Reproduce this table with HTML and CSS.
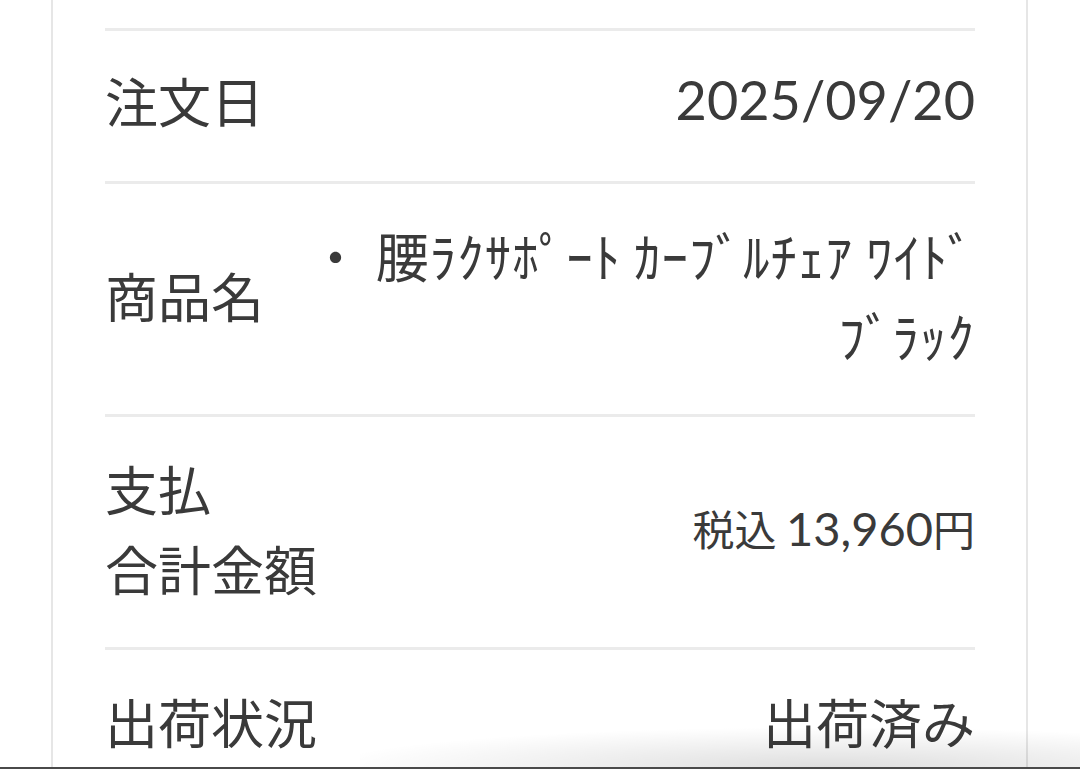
FILE: index.html
```html
<!DOCTYPE html>
<html lang="ja">
<head>
<meta charset="utf-8">
<title>注文詳細</title>
<link rel="stylesheet" href="styles.css">
</head>
<body>
<div class="page">
  <section class="card">
    <div class="row row-first">
      <div class="label">注文日</div>
      <div class="value date">2025/09/20</div>
    </div>
    <div class="row">
      <div class="label">商品名</div>
      <div class="value product">・ 腰ﾗｸｻﾎﾟｰﾄ ｶｰﾌﾞﾙﾁｪｱ ﾜｲﾄﾞ ﾌﾞﾗｯｸ</div>
    </div>
    <div class="row">
      <div class="label">支払<br>合計金額</div>
      <div class="value price"><span class="tax">税込</span> <span class="num">13,960</span><span class="yen">円</span></div>
    </div>
    <div class="row">
      <div class="label">出荷状況</div>
      <div class="value status">出荷済み</div>
    </div>
  </section>
  <div class="bottom-shadow"></div>
  <div class="bottom-bar"></div>
</div>
</body>
</html>
```

FILE: styles.css
```css
html, body {
  margin: 0;
  padding: 0;
  background: #ffffff;
  height: 769px;
  overflow: hidden;
}

.page {
  position: relative;
  height: 769px;
  overflow: hidden;
  font-family: "Noto Sans CJK JP", "Noto Sans", sans-serif;
  color: #383838;
}

.card {
  margin-left: 51px;
  width: 870px;
  padding: 28px 51px 0 52px;
  border-left: 2px solid #e6e6e6;
  border-right: 2px solid #e6e6e6;
  min-height: 800px;
}

.row {
  display: flex;
  align-items: center;
  border-top: 3px solid #ebebeb;
  padding: 31px 0 39px;
}

.row-first {
  padding: 29px 0 41px;
}

.label {
  flex: 0 0 200px;
  white-space: nowrap;
  font-size: 53px;
  line-height: 80px;
  color: #3a3a3a;
}

.value {
  flex: 1;
  text-align: right;
  line-height: 80px;
  color: #3a3a3a;
}

.date {
  font-family: "Lato", "Noto Sans CJK JP", sans-serif;
  font-size: 54px;
}

.product {
  font-size: 53px;
  letter-spacing: 1px;
}

.price {
  font-size: 42px;
}

.price .num {
  font-family: "Lato", sans-serif;
  font-size: 47px;
}

.status {
  font-size: 53px;
}

.bottom-shadow {
  position: absolute;
  left: 360px;
  right: 0;
  bottom: 2px;
  height: 40px;
  background: radial-gradient(ellipse 70% 100% at 65% 100%, rgba(0,0,0,0.13), rgba(0,0,0,0) 100%);
  pointer-events: none;
}

.bottom-bar {
  position: absolute;
  left: 0;
  right: 0;
  bottom: 0;
  height: 2px;
  background: #4a4a4a;
}
```
